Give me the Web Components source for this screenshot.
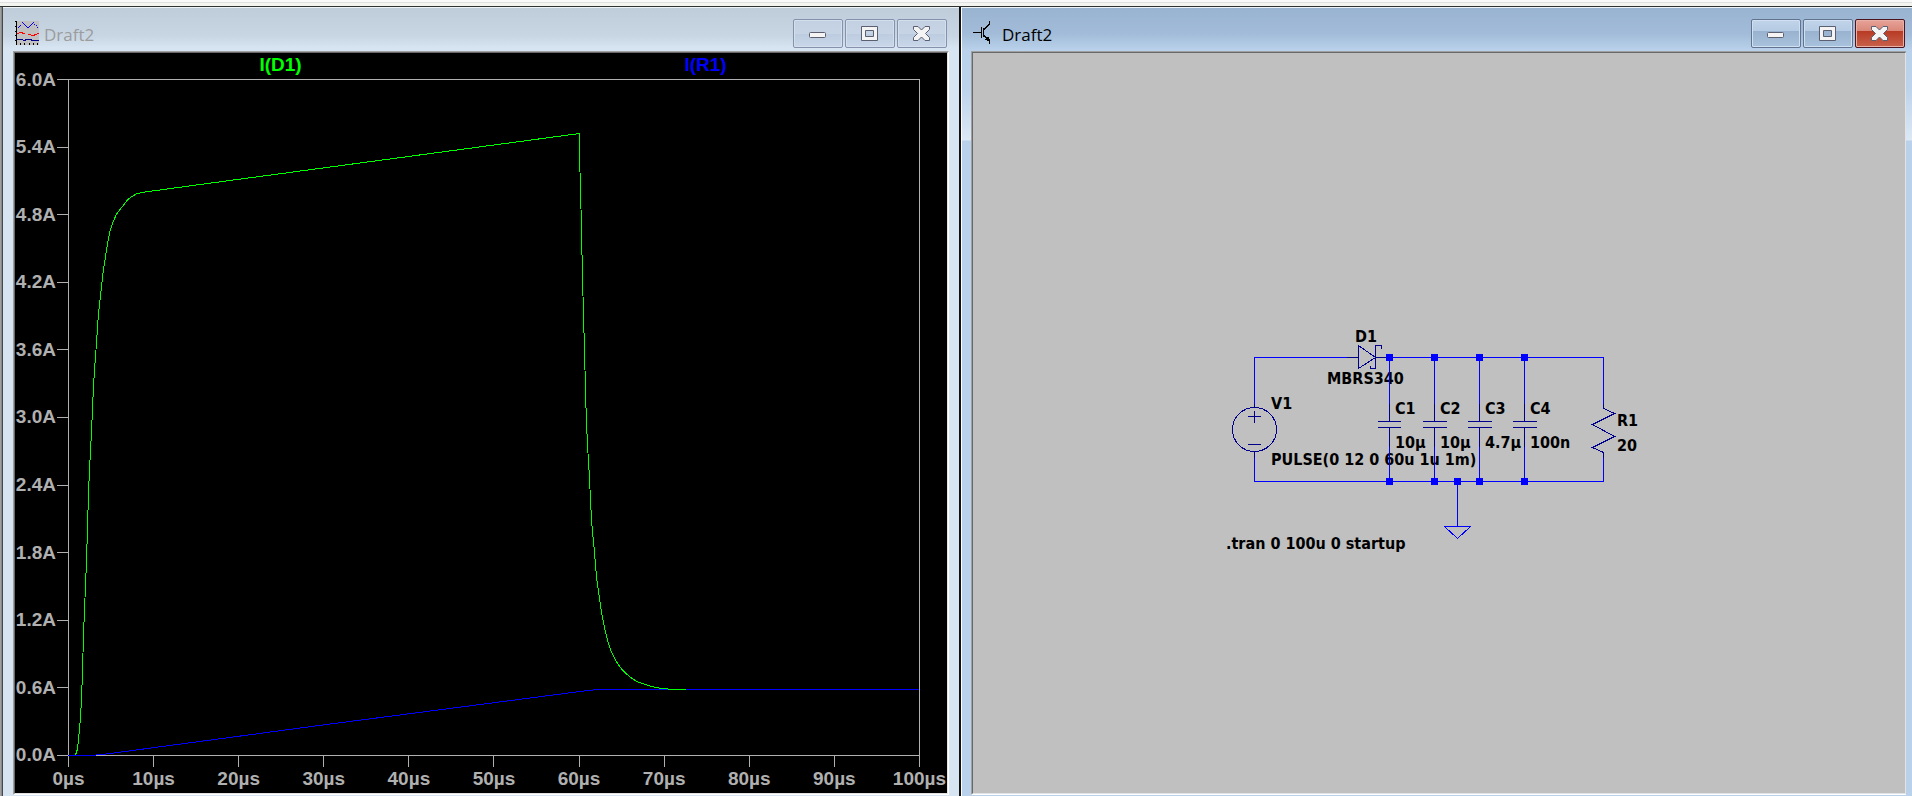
<!DOCTYPE html>
<html lang="en">
<head>
<meta charset="utf-8">
<title>Draft2</title>
<style>
html, body { height: 100%; margin: 0; }
body { font-family: "Open Sans", sans-serif; overflow: hidden; background: #000; }
</style>
</head>
<body>
<app-desktop>
  <mdi-window caption="Draft2">
    <svg slot="icon" width="24" height="24" viewBox="0 0 24 24" shape-rendering="crispEdges" aria-hidden="true">
      <rect x="1" width="23" height="24" fill="#c0c0c0"/>
      <path d="M1.5 0v24M0 .5h2M0 5.500h2M0 10.500h2M0 14.500h2M0 19.500h2M5.500 22v2M9.500 22v2M14.500 22v2M18.500 22v2M22.500 22v2" stroke="#000" fill="none"/>
      <path d="M3 6h1v1H3zM4 5h1v1H4zM5 4h1v1H5zM7 1h1v1H7zM8 2h1v1H8zM9 3h1v1H9zM10 4h1v1h-1zM11 5h1v1h-1zM12 6h2v1h-2zM14 5h1v1h-1zM15 4h1v1h-1zM16 3h1v1h-1zM17 2h1v1h-1zM18 1h1v1h-1zM19 3h1v1h-1zM21 4h1v1h-1zM22 6h1v1h-1z" fill="#00f"/>
      <path d="M2 12.500h2M4 11.500h4M7 12.500h3M13 13.500h3M16 14.500h4M19 13.500h3M22 12.500h2" stroke="#f00" fill="none"/>
      <path d="M2 18.500h6M8 19.500h3M10 18.500h7M16 19.500h8" stroke="#00008b" fill="none"/>
    </svg>
    <wave-plot></wave-plot>
  </mdi-window>
  <mdi-window caption="Draft2" active>
    <svg slot="icon" width="24" height="24" viewBox="0 0 24 24" shape-rendering="crispEdges" aria-hidden="true">
      <path d="M0 11.500h8M8.500 6v11M10.500 7v9M16.500 0v3M16.500 18v5M13 17.500h3M12 18.500h5M14 16.500h2M14 19.500h3" stroke="#000" fill="none"/>
      <path d="M11 8.500l5.500-5.500M11 14.500l5 5" stroke="#000" fill="none"/>
    </svg>
    <schematic-view></schematic-view>
  </mdi-window>
</app-desktop>

<template id="desktop-tpl">
  <style>
    :host { display: grid; grid-template-rows: 7px minmax(0, 1fr); height: 100vh; }
    .rail { background: linear-gradient(#f9f9f9 0 2px, #e0e0e0 2px 3px, #f4f5f1 3px 6px, #30332e 6px); }
    .area { display: grid; grid-template-columns: minmax(0, 956fr) minmax(0, 951fr); column-gap: 2px;
      padding-left: 3px; background: linear-gradient(90deg, #a0a0a0 0 1px, #8a8a8a 1px 2px, #484848 2px 3px, #111 3px); }
  </style>
  <div class="rail"></div>
  <main class="area"><slot></slot></main>
</template>

<template id="window-tpl">
  <style>
    :host { --cap: linear-gradient(#bfcddb, #c8d6e4 28px, #d7e4f2 40px); --text: #9c9c9c;
      --side: #d7e4f2; --btn: linear-gradient(#c2d0e1, #c6d4e5 50%, #bccbdf 50%, #c9d7e9); --edge: #8692ad; --shine: #d3dfec;
      --glyph: #5b5f70; --close: var(--btn); --close-edge: var(--edge); --close-shine: var(--shine);
      display: grid; grid-template-rows: 43px minmax(0, 1fr); box-sizing: border-box;
      border-top: 1px solid #edf3f9; padding: 0 10px 1px; background: var(--cap) top / 100% 43px no-repeat, var(--side); }
    :host([active]) { --cap: linear-gradient(#99b4d1, #a1bbd8 25px, #b9d1ea 42px); --text: #000;
      --side: linear-gradient(#b9d1ea 43px, #bcd3eb 80px, #dce8f5 132px, #b9d1ea 133px);
      --btn: linear-gradient(#c0d3e9, #b5cbe3 42%, #98b2cf 42%, #a9c2dd); --edge: #627390; --shine: #d0e0f0;
      --close: linear-gradient(#e7a399, #d98678 42%, #b83b25 42%, #c8614b); --close-edge: #4c1420; --close-shine: #e9b0a5;
      border-left: 1px solid #fff; padding: 0 6px 1px 9px; }
    header { display: flex; align-items: flex-start; }
    .icon { display: flex; padding: 13px 5px 0 2px; }
    h1 { flex: 1; margin: 0; padding-top: 15px; font-size: 17px; font-weight: 400; line-height: 24px; color: var(--text); }
    .buttons { display: flex; gap: 2px; padding: 11px 2px 0 0; }
    :host([active]) .buttons { padding-right: 1px; }
    button { width: 50px; height: 29px; box-sizing: border-box; padding: 0; display: grid; place-items: center;
      border: 1px solid var(--edge); border-radius: 2px; background: var(--btn); box-shadow: inset 0 0 0 1px var(--shine); }
    button.close { background: var(--close); border-color: var(--close-edge); box-shadow: inset 0 0 0 1px var(--close-shine); }
    button svg { color: var(--glyph); display: block; }
    .client { display: grid; border: 1px solid; border-color: #a0a0a0 #fff #fff #a0a0a0; min-height: 0; }
    .inner { display: grid; border: 1px solid; border-color: #696969 #e3e3e3 #e3e3e3 #696969; min-height: 0; }
    :host([active]) .client { border-right-width: 0; }
  </style>
  <header>
    <span class="icon"><slot name="icon"></slot></span>
    <h1></h1>
    <div class="buttons">
      <button type="button" aria-label="Minimize"><svg width="20" height="18" viewBox="1 0 20 18"><rect x="2.500" y="7.500" width="16" height="5" rx="1" fill="#f4f4f4" stroke="currentColor"/></svg></button>
      <button type="button" aria-label="Maximize"><svg width="20" height="18" viewBox="1 0 20 18"><path fill-rule="evenodd" d="M2.500 1.500h16v14h-16zM6.500 5.500h8v6h-8z" fill="#f4f4f4" stroke="currentColor" stroke-linejoin="round"/></svg></button>
      <button type="button" class="close" aria-label="Close"><svg width="20" height="18" viewBox="1 0 20 18"><path d="M2.500 1.500h4.500l3.500 3.500 3.500-3.500h4.500v3l-4 4 4 4v3h-4.500l-3.500-3.500-3.500 3.500h-4.500v-3l4-4-4-4z" fill="#f4f4f4" stroke="currentColor" stroke-linejoin="round"/></svg></button>
    </div>
  </header>
  <div class="client"><div class="inner"><slot></slot></div></div>
</template>

<template id="plot-tpl">
  <style>
    :host { display: grid; grid-template-columns: 53px minmax(0, 1fr) 27px; grid-template-rows: 26px minmax(0, 1fr) 37px;
      background: #000; color: #b0b0b0; font: bold 19px/20px "Liberation Sans", Arial, sans-serif; overflow: hidden; }
    .legend { grid-area: 1 / 2; display: grid; grid-template-columns: 1fr 1fr; text-align: center; line-height: 24px; padding-right: 2px; }
    .d1 { color: #0f0; }
    .r1 { color: #00f; }
    .y { grid-area: 2 / 1; display: flex; flex-direction: column; justify-content: space-between; }
    .y div { height: 1px; display: flex; align-items: center; justify-content: flex-end; gap: 1px; }
    .y div::after { content: ""; width: 11px; height: 1px; background: #b0b0b0; }
    .x { grid-area: 3 / 2; display: flex; justify-content: space-between; }
    .x div { width: 1px; display: flex; flex-direction: column; align-items: center; gap: 2px; white-space: nowrap; }
    .x div::before { content: ""; width: 1px; height: 11px; background: #b0b0b0; }
    .box { grid-area: 2 / 2; border: 1px solid #b0b0b0; display: grid; min-height: 0; }
    svg { display: block; width: calc(100% + 2px); height: calc(100% + 2px); margin: -1px; min-height: 0; }
    path { fill: none; vector-effect: non-scaling-stroke; }
  </style>
  <div class="legend"><span class="d1">I(D1)</span><span class="r1">I(R1)</span></div>
  <div class="y"></div>
  <div class="box">
    <svg viewBox="68 79 852 677" preserveAspectRatio="none" shape-rendering="crispEdges" role="img" aria-label="Currents over time">
      <path stroke="#00f" d="M68 755.500H91L102 754.500L110 753.500L319 725.500L580 691.500L598 689.500H919"/>
      <path stroke="#0f0" d="M75.500 755L77.500 749L79 734L80.500 718L81.500 699L82.500 672L83.500 634L84.500 611L85.500 585L86.500 562L87.500 527L88.500 493L89.500 470L90.500 451L91.500 432L92.500 409L93.500 386L94.500 370L96.500 343L98.500 313L100.500 296L102.500 277L104.500 263L106.500 250L108.500 238L110.500 229L113.500 221L116.500 214L122 207L127 200.500L131 197L137 193.500L145 192L200 184.500L579.500 133.500V159L580.500 185L581.500 232L582.500 276L583.500 315L584.500 349L585.500 390L586.500 424L587.500 444L588.500 462L589.500 478L590.500 500L591.500 520L592.500 532L593.500 542L594.500 552L595.500 565L596.500 577L597.500 585L599.500 598L601.500 612L603.500 622L605.500 632L607.500 640L611 651L614.500 658L618.500 665L622.500 670L626.500 674L632 678.500L638 682L645 684.500L652 686.500L659 688L668 689H686"/>
    </svg>
  </div>
  <div class="x"></div>
</template>

<template id="schematic-tpl">
  <style>
    :host { display: grid; min-height: 0; background: #c0c0c0; }
    svg { display: block; width: 100%; height: 100%; min-height: 0; }
    text { font: bold 16px "DejaVu Sans Condensed", Tahoma, sans-serif; fill: #000; }
    .wire { stroke: #00f; fill: none; }
    .part { stroke: #00008b; fill: none; }
    .node { fill: #00f; }
  </style>
  <svg viewBox="973 53 932 740" role="img" aria-label="Schematic">
    <g>
      <text x="1355" y="342">D1</text><text x="1327" y="384">MBRS340</text>
      <text x="1271" y="409">V1</text><text x="1271" y="465">PULSE(0 12 0 60u 1u 1m)</text>
      <text x="1226" y="549">.tran 0 100u 0 startup</text>
      <text x="1395" y="414">C1</text><text x="1395" y="448">10µ</text>
      <text x="1440" y="414">C2</text><text x="1440" y="448">10µ</text>
      <text x="1485" y="414">C3</text><text x="1485" y="448">4.7µ</text>
      <text x="1530" y="414">C4</text><text x="1530" y="448">100n</text>
      <text x="1617" y="426">R1</text><text x="1617" y="451">20</text>
    </g>
    <g shape-rendering="crispEdges" transform="translate(.5 .5)">
      <path class="wire" d="M1254 403V357H1346M1389 357H1603V403M1254 456V481H1603V457M1389 357V403M1389 446V481M1434 357V403M1434 446V481M1479 357V403M1479 446V481M1524 357V403M1524 446V481M1457 481V526M1444 526H1470L1457 538Z"/>
      <circle class="part" cx="1254" cy="429" r="22"/>
      <path class="part" d="M1254 403V407M1254 451V457M1247 416H1260M1254 410V422M1247 444H1260M1346 357H1358M1375 357H1389M1358 345V368L1375 357ZM1381 348V345H1375V368H1370V365"/>
      <path class="part" d="M1389 403V421M1377 421H1400M1377 427H1400M1389 427V446M1434 403V421M1422 421H1446M1422 427H1446M1434 427V446M1479 403V421M1467 421H1491M1467 427H1491M1479 427V446M1524 403V421M1512 421H1536M1512 427H1536M1524 427V446"/>
      <path class="part" d="M1603 403V408L1614 413L1592 424L1614 436L1592 447L1603 452V457"/>
    </g>
    <path class="node" shape-rendering="crispEdges" d="M1386 354h7v7h-7zM1431 354h7v7h-7zM1476 354h7v7h-7zM1521 354h7v7h-7zM1386 478h7v7h-7zM1431 478h7v7h-7zM1454 478h7v7h-7zM1476 478h7v7h-7zM1521 478h7v7h-7z"/>
  </svg>
</template>

<script>
class TemplateElement extends HTMLElement {
  constructor() {
    super();
    this.attachShadow({ mode: "open" }).append(
      document.getElementById(this.constructor.template).content.cloneNode(true));
  }
}
class AppDesktop extends TemplateElement { static template = "desktop-tpl"; }
class MdiWindow extends TemplateElement {
  static template = "window-tpl";
  connectedCallback() {
    this.shadowRoot.querySelector("h1").textContent = this.getAttribute("caption");
  }
}
class WavePlot extends TemplateElement {
  static template = "plot-tpl";
  connectedCallback() {
    const fill = (selector, labels) => {
      this.shadowRoot.querySelector(selector).replaceChildren(...labels.map(label => {
        const item = document.createElement("div");
        const text = document.createElement("span");
        text.textContent = label;
        item.append(text);
        return item;
      }));
    };
    const steps = [...Array(11).keys()];
    fill(".y", steps.map(i => (6 - i * 0.6).toFixed(1) + "A"));
    fill(".x", steps.map(i => i * 10 + "µs"));
  }
}
class SchematicView extends TemplateElement { static template = "schematic-tpl"; }
customElements.define("app-desktop", AppDesktop);
customElements.define("mdi-window", MdiWindow);
customElements.define("wave-plot", WavePlot);
customElements.define("schematic-view", SchematicView);
</script>
</body>
</html>
